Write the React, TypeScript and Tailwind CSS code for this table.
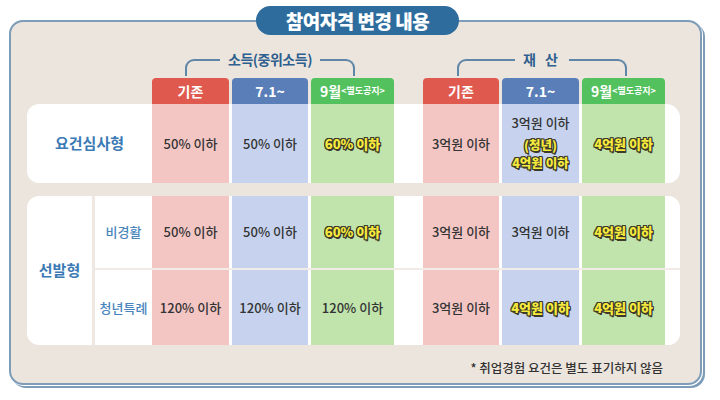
import React from 'react';

const font = { fontFamily: '"Noto Sans CJK KR", "Noto Sans", sans-serif' };

const outline =
    '[text-shadow:-1px_-1px_0_#3d3a2c,1px_-1px_0_#3d3a2c,-1px_1px_0_#3d3a2c,1px_1px_0_#3d3a2c,0_1px_0_#3d3a2c,0_-1px_0_#3d3a2c,1px_0_0_#3d3a2c,-1px_0_0_#3d3a2c,1px_2px_0_#3d3a2c]';

// 강조 텍스트 (노란 글씨 + 어두운 외곽선)
function Hi({ children }: { children: React.ReactNode }) {
    return (
        <span className={`inline-block text-center font-black text-[13px] leading-[16px] text-[#f6ea3c] ${outline}`}>
            {children}
        </span>
    );
}

function Txt({ children }: { children: React.ReactNode }) {
    return <span className="inline-block text-[13px] leading-[16px] font-medium text-[#333333]">{children}</span>;
}

function Bracket({ label, ml, track }: { label: string; ml: string; track?: string }) {
    return (
        <div className={`${ml} mt-[7px] w-[170px] h-[17px] border-t-2 border-x-2 border-[#5f86a8] rounded-t-[9px] flex justify-center`}>
            <span className={`-mt-[12px] h-[20px] leading-[20px] px-[8px] bg-[#ece5dd] text-[14px] font-bold text-[#2f5f8f] ${track ?? 'tracking-[-0.5px]'}`}>
                {label}
            </span>
        </div>
    );
}

function Cells({ v }: { v: React.ReactNode[] }) {
    return (
        <>
            <div className="w-[77px] bg-[#f3c6c4] flex items-center justify-center">{v[0]}</div>
            <div className="w-[3px]" />
            <div className="w-[76px] bg-[#c7d3ee] flex items-center justify-center">{v[1]}</div>
            <div className="w-[3px]" />
            <div className="w-[83px] bg-[#c0e4ac] flex items-center justify-center">{v[2]}</div>
            <div className="w-[29px]" />
            <div className="w-[76px] bg-[#f3c6c4] flex items-center justify-center">{v[3]}</div>
            <div className="w-[3px]" />
            <div className="w-[77px] bg-[#c7d3ee] flex flex-col items-center justify-center">{v[4]}</div>
            <div className="w-[3px]" />
            <div className="w-[83px] bg-[#c0e4ac] flex items-center justify-center">{v[5]}</div>
        </>
    );
}

export default function App() {
    return (
        <div className="w-[720px] h-[400px] bg-white pt-[20px] pl-[9px]" style={font}>
            <div className="relative w-[693px] h-[365px] rounded-[14px] border-2 border-[#7c9cb8] bg-[#ece5dd] shadow-[1px_1px_0_#ffffff,3px_3px_0_#7c9cb8]">
                {/* 제목 */}
                <div className="absolute left-[245px] -top-[16px] w-[203px] h-[29px] rounded-full bg-[#2d6c9c] flex items-center justify-center">
                    <span className="text-white text-[19px] leading-[24px] font-black tracking-[-0.5px]">참여자격 변경 내용</span>
                </div>

                <div className="pl-[16px] pt-[30px] flex flex-col">
                    {/* 괄호 라벨 */}
                    <div className="flex h-[24px] mb-[2px]">
                        <Bracket label="소득(중위소득)" ml="ml-[158px]" />
                        <Bracket label="재 산" ml="ml-[102px]" track="tracking-[3px]" />
                    </div>

                    {/* 헤더 */}
                    <div className="flex h-[26px] ml-[125px] text-white font-bold text-[14px]">
                        <div className="w-[77px] bg-[#e0594f] rounded-t-[4px] flex items-center justify-center">기존</div>
                        <div className="w-[3px]" />
                        <div className="w-[76px] bg-[#5a7fb8] rounded-t-[4px] flex items-center justify-center">7.1~</div>
                        <div className="w-[3px]" />
                        <div className="w-[83px] bg-[#53c15e] rounded-t-[4px] flex items-center justify-center">
                            9월<span className="text-[9px] font-bold">&lt;별도공지&gt;</span>
                        </div>
                        <div className="w-[29px]" />
                        <div className="w-[76px] bg-[#e0594f] rounded-t-[4px] flex items-center justify-center">기존</div>
                        <div className="w-[3px]" />
                        <div className="w-[77px] bg-[#5a7fb8] rounded-t-[4px] flex items-center justify-center">7.1~</div>
                        <div className="w-[3px]" />
                        <div className="w-[83px] bg-[#53c15e] rounded-t-[4px] flex items-center justify-center">
                            9월<span className="text-[9px] font-bold">&lt;별도공지&gt;</span>
                        </div>
                    </div>

                    {/* 요건심사형 */}
                    <div className="flex w-[653px] h-[79px] bg-white rounded-[12px] rounded-tr-[14px]">
                        <div className="w-[125px] flex items-center justify-center text-[15px] font-bold text-[#3b7ab5]">요건심사형</div>
                        <Cells
                            v={[
                                <Txt>50% 이하</Txt>,
                                <Txt>50% 이하</Txt>,
                                <Hi>60% 이하</Hi>,
                                <Txt>3억원 이하</Txt>,
                                <>
                                    <div className="mb-[5px] h-[16px] flex items-center"><Txt>3억원 이하</Txt></div>
                                    <span className={`block text-center font-black text-[12.5px] leading-[18px] text-[#f6ea3c] ${outline}`}>(청년)</span>
                                    <span className={`block text-center font-black text-[12.5px] leading-[18px] text-[#f6ea3c] ${outline}`}>4억원 이하</span>
                                </>,
                                <Hi>4억원 이하</Hi>,
                            ]}
                        />
                    </div>

                    {/* 선발형 */}
                    <div className="flex w-[653px] h-[149px] mt-[13px] bg-white rounded-[12px] overflow-hidden">
                        <div className="w-[65px] flex items-center justify-center text-[15px] font-bold text-[#3b7ab5]">선발형</div>
                        <div className="w-[3px] bg-[#efe8e2]" />
                        <div className="flex-1 flex flex-col gap-[2px] bg-[#f2ebe6]">
                            <div className="flex h-[72px] bg-white">
                                <div className="w-[57px] flex items-center justify-center text-[13px] font-medium text-[#4a86bd]">비경활</div>
                                <Cells
                                    v={[
                                        <Txt>50% 이하</Txt>,
                                        <Txt>50% 이하</Txt>,
                                        <Hi>60% 이하</Hi>,
                                        <Txt>3억원 이하</Txt>,
                                        <Txt>3억원 이하</Txt>,
                                        <Hi>4억원 이하</Hi>,
                                    ]}
                                />
                            </div>
                            <div className="flex h-[75px] bg-white">
                                <div className="w-[57px] flex items-center justify-center text-[13px] font-medium text-[#4a86bd]">청년특례</div>
                                <Cells
                                    v={[
                                        <Txt>120% 이하</Txt>,
                                        <Txt>120% 이하</Txt>,
                                        <Txt>120% 이하</Txt>,
                                        <Txt>3억원 이하</Txt>,
                                        <Hi>4억원 이하</Hi>,
                                        <Hi>4억원 이하</Hi>,
                                    ]}
                                />
                            </div>
                        </div>
                    </div>

                    {/* 주석 */}
                    <div className="w-[653px] pr-[17px] mt-[15px] flex justify-end text-[12.5px] leading-[16px] font-medium text-[#333333]">
                        * 취업경험 요건은 별도 표기하지 않음
                    </div>
                </div>
            </div>
        </div>
    );
}
